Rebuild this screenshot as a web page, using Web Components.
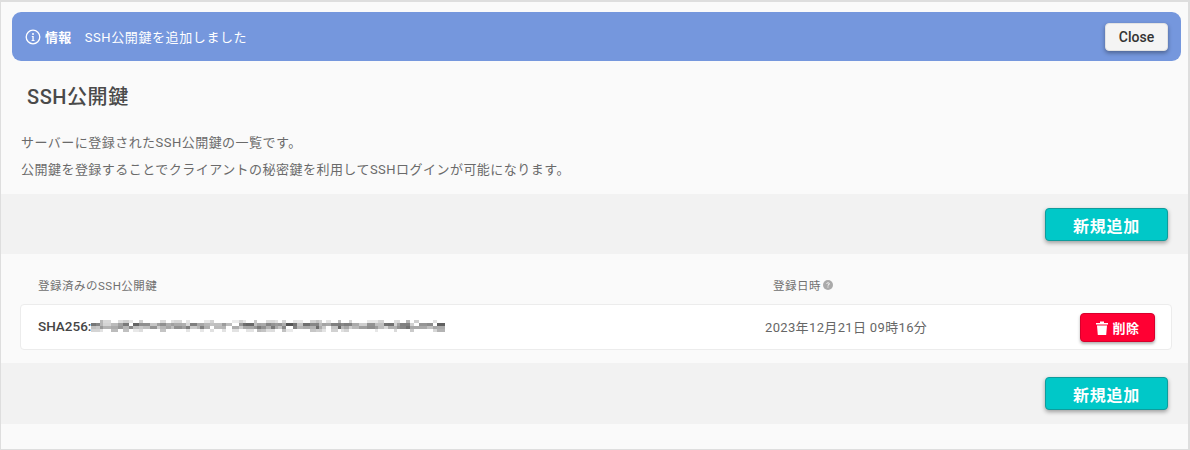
<!DOCTYPE html>
<html lang="ja">
<head>
<meta charset="utf-8">
<title>SSH公開鍵</title>
<style>
    html, body { margin: 0; padding: 0; }
    body { width: 1190px; height: 450px; overflow: hidden; font-family: Roboto, "Noto Sans CJK JP", sans-serif; color: #555; }
</style>
</head>
<body>
<ssh-page>
    <ssh-alert label="情報">SSH公開鍵を追加しました</ssh-alert>
    <page-title>SSH公開鍵</page-title>
    <page-lead>
        <p>サーバーに登録されたSSH公開鍵の一覧です。</p>
        <p>公開鍵を登録することでクライアントの秘密鍵を利用してSSHログインが可能になります。</p>
    </page-lead>
    <action-band></action-band>
    <key-list>
        <key-row date="2023年12月21日 09時16分"></key-row>
    </key-list>
    <action-band></action-band>
</ssh-page>

<script>
class SshPage extends HTMLElement {
    constructor() {
        super();
        this.attachShadow({ mode: 'open' });
        this.shadowRoot.innerHTML = `
            <style>
                :host {
                    display: block;
                    box-sizing: border-box;
                    width: 1190px;
                    height: 450px;
                    padding-top: 10px;
                    background: #fafafa;
                    border: 1px solid #dedede;
                    border-top-width: 2px;
                    border-right-width: 2px;
                }
            </style>
            <slot></slot>
        `;
    }
}

class SshAlert extends HTMLElement {
    constructor() {
        super();
        this.attachShadow({ mode: 'open' });
        this.shadowRoot.innerHTML = `
            <style>
                :host {
                    display: flex;
                    align-items: center;
                    box-sizing: border-box;
                    height: 49px;
                    margin: 0 7px 0 11px;
                    padding: 0 13px;
                    background: #7597dd;
                    border-radius: 9px;
                    color: #fff;
                    font-size: 13px;
                }
                svg { width: 16px; height: 16px; margin-right: 4px; flex: none; }
                b { font-weight: 700; margin-right: 13px; letter-spacing: .35px; }
                .msg { flex: 1; letter-spacing: .6px; }
                button {
                    box-sizing: border-box;
                    width: 63px;
                    height: 28px;
                    padding: 0;
                    border: 1px solid #e2e2e2;
                    border-radius: 4px;
                    background: #f4f4f4;
                    color: #333;
                    font: 500 14px Roboto, "Noto Sans CJK JP", sans-serif;
                    box-shadow: 0 2px 4px rgba(0,0,0,.35);
                }
            </style>
            <svg viewBox="0 0 16 16" fill="none">
                <circle cx="8" cy="8" r="6.8" stroke="#fff" stroke-width="1.3"/>
                <circle cx="8" cy="4.9" r="1" fill="#fff"/>
                <path d="M6.8 7h1.9v4h.8v1H6.6v-1h.8V8h-.6z" fill="#fff"/>
            </svg>
            <b></b>
            <span class="msg"><slot></slot></span>
            <button type="button">Close</button>
        `;
        this.shadowRoot.querySelector('b').textContent = this.getAttribute('label');
        this.shadowRoot.querySelector('button').addEventListener('click', () => { this.style.visibility = 'hidden'; });
    }
}

class PageTitle extends HTMLElement {
    constructor() {
        super();
        this.attachShadow({ mode: 'open' });
        this.shadowRoot.innerHTML = `
            <style>
                :host {
                    display: block;
                    margin: 23px 0 0 26px;
                    height: 26px;
                    line-height: 26px;
                    font-size: 20px;
                    font-weight: 500;
                    letter-spacing: .55px;
                    color: #4a4a4a;
                }
            </style>
            <slot></slot>
        `;
    }
}

class PageLead extends HTMLElement {
    constructor() {
        super();
        this.attachShadow({ mode: 'open' });
        this.shadowRoot.innerHTML = `
            <style>
                :host {
                    display: block;
                    margin: 19px 0 0 20px;
                    height: 65px;
                    font-size: 13px;
                    line-height: 27px;
                    letter-spacing: .47px;
                    color: #6a6a6a;
                }
                ::slotted(p) { margin: 0; }
            </style>
            <slot></slot>
        `;
    }
}

class ActionBand extends HTMLElement {
    constructor() {
        super();
        this.attachShadow({ mode: 'open' });
        this.shadowRoot.innerHTML = `
            <style>
                :host {
                    display: flex;
                    justify-content: flex-end;
                    align-items: flex-start;
                    box-sizing: border-box;
                    height: 60px;
                    padding: 14px 20px 0 0;
                    background: #f2f2f2;
                }
                :host(:last-child) { height: 61px; }
                button {
                    box-sizing: border-box;
                    width: 123px;
                    height: 33px;
                    padding: 0;
                    border: 1px solid #0f9c9c;
                    border-radius: 4px;
                    background: #00c8c8;
                    color: #fff;
                    font: 700 16px Roboto, "Noto Sans CJK JP", sans-serif;
                    letter-spacing: .8px;
                    box-shadow: 0 2px 4px rgba(0,0,0,.35);
                }
            </style>
            <button type="button">新規追加</button>
        `;
    }
}

class KeyList extends HTMLElement {
    constructor() {
        super();
        this.attachShadow({ mode: 'open' });
        this.shadowRoot.innerHTML = `
            <style>
                :host {
                    display: block;
                    box-sizing: border-box;
                    height: 109px;
                    padding: 0 16px 0 19px;
                }
                .head {
                    display: flex;
                    align-items: center;
                    box-sizing: border-box;
                    height: 50px;
                    padding: 12px 0 0 18px;
                    font-size: 11.5px;
                    letter-spacing: .5px;
                    color: #707070;
                }
                .head span:first-child { width: 735px; }
                .date { display: flex; align-items: center; gap: 2px; }
                svg { width: 10px; height: 10px; }
            </style>
            <div class="head">
                <span>登録済みのSSH公開鍵</span>
                <span class="date">登録日時
                    <svg viewBox="0 0 10 10">
                        <circle cx="5" cy="5" r="5" fill="#aaa"/>
                        <path d="M3.4 3.9C3.5 2.9 4.2 2.4 5.1 2.4c1 0 1.6.6 1.6 1.3 0 1.1-1.2 1.1-1.3 2.1H4.6c0-1.3 1.2-1.4 1.2-2.1 0-.3-.3-.6-.8-.6-.4 0-.7.3-.8.8zM4.5 6.5h.9v.9h-.9z" fill="#fff"/>
                    </svg>
                </span>
            </div>
            <slot></slot>
        `;
    }
}

class KeyRow extends HTMLElement {
    constructor() {
        super();
        this.attachShadow({ mode: 'open' });
        this.shadowRoot.innerHTML = `
            <style>
                :host {
                    display: flex;
                    align-items: center;
                    box-sizing: border-box;
                    height: 46px;
                    padding: 0 16px 2px 17px;
                    background: #fff;
                    border: 1px solid #ececec;
                    border-radius: 4px;
                }
                .key { display: flex; align-items: center; width: 727px; font-size: 13.5px; font-weight: 500; color: #444; }
                .blur { display: block; width: 354px; height: 18px; flex: none; }
                .date { flex: 1; font-size: 13px; letter-spacing: .35px; color: #666; }
                button {
                    display: flex;
                    align-items: center;
                    justify-content: center;
                    gap: 5px;
                    box-sizing: border-box;
                    width: 75px;
                    height: 29px;
                    margin-top: 3px;
                    padding: 0;
                    border: 1px solid #d8002c;
                    border-radius: 4px;
                    background: #ff0033;
                    color: #fff;
                    font: 700 13px Roboto, "Noto Sans CJK JP", sans-serif;
                    letter-spacing: .4px;
                    box-shadow: 0 2px 3px rgba(0,0,0,.3);
                }
                button svg { width: 12px; height: 14px; }
            </style>
            <span class="key">SHA256:<svg class="blur" viewBox="0 0 354 18">
                <defs><filter id="soft"><feGaussianBlur stdDeviation="0.7"/></filter></defs>
                <g filter="url(#soft)"></g>
            </svg></span>
            <span class="date"></span>
            <button type="button">
                <svg viewBox="0 0 12 14"><path d="M0 2h4V.6h4V2h4v1.6H0zM1 4.6h10L10.2 14H1.8z" fill="#fff"/></svg>
                削除
            </button>
        `;
        this.shadowRoot.querySelector('.date').textContent = this.getAttribute('date');
        this._drawMosaic();
    }

    // the key itself is masked in the reference, so draw a pixel mosaic
    _drawMosaic() {
        const group = this.shadowRoot.querySelector('.blur g');
        let seed = 977;
        const next = () => { seed = (seed * 25173 + 13849) % 65536; return seed / 65536; };
        let rects = '';
        let x = 0;
        while (x < 352) {
            const width = 3 + Math.floor(next() * 6);
            const rows = [[3, .4, .5], [6, 1, .95], [9, .9, .95], [12, .45, .45]];
            for (const [y, weight, chance] of rows) {
                if (next() > chance) continue;
                const shade = Math.round(85 + next() * 110);
                const opacity = Math.min(1, (next() * .5 + .6) * weight);
                rects += `<rect x="${x}" y="${y}" width="${width}" height="3" fill="rgb(${shade},${shade},${shade})" opacity="${opacity.toFixed(2)}"/>`;
            }
            x += width;
        }
        group.innerHTML = rects;
    }
}

customElements.define('ssh-page', SshPage);
customElements.define('ssh-alert', SshAlert);
customElements.define('page-title', PageTitle);
customElements.define('page-lead', PageLead);
customElements.define('action-band', ActionBand);
customElements.define('key-list', KeyList);
customElements.define('key-row', KeyRow);
</script>
</body>
</html>
